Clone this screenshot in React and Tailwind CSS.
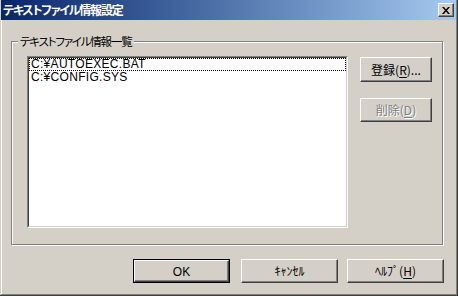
import React from 'react';

const FONT = "[font-family:'Noto_Sans_CJK_JP',sans-serif] [font-feature-settings:'palt']";
const LATIN = "[font-family:'Liberation_Sans','Noto_Sans_CJK_JP',sans-serif]";

function Btn({ children, disabled, def, className = '' }) {
  const face = (
    <div className="flex-1 flex items-center justify-center border border-t-white border-l-white border-r-[#404040] border-b-[#404040] shadow-[inset_-1px_-1px_0_#808080] bg-[#d4d0c8]">
      <span className={disabled ? 'text-[#808080] [text-shadow:1px_1px_0_#fff]' : 'text-black'}>{children}</span>
    </div>
  );
  return (
    <div className={`flex text-[12px] leading-none ${def ? 'border border-black' : ''} ${className}`}>
      {face}
    </div>
  );
}

function Ul({ children }) {
  return <span className="underline underline-offset-[2px]">{children}</span>;
}

export default function App() {
  const files = ['C:¥AUTOEXEC.BAT', 'C:¥CONFIG.SYS'];

  return (
    <div className={`w-[458px] h-[296px] bg-[#d4d0c8] border-r border-b border-[#404040] pl-px ${FONT}`}>
      <div className="h-full flex flex-col border-r border-b border-[#808080]">
        {/* title bar */}
        <div className="h-[20px] flex items-center justify-between bg-gradient-to-r from-[#0a246a] to-[#a6caf0] pl-[2px] pr-[2px]">
          <span className="text-white font-bold text-[12px] tracking-[-1.2px] leading-none">テキストファイル情報設定</span>
          <div className="w-[16px] h-[14px] flex items-center justify-center bg-[#d4d0c8] border border-t-white border-l-white border-r-[#404040] border-b-[#404040] shadow-[inset_-1px_-1px_0_#808080]">
            <svg width="8" height="7" viewBox="0 0 8 7">
              <path d="M0 0h2l2 2.5L6 0h2L5 3.5 8 7H6L4 4.5 2 7H0l3-3.5z" fill="#000" />
            </svg>
          </div>
        </div>

        {/* body */}
        <div className="flex-1 flex flex-col border-l border-white pl-[9px] pt-[21px]">
          {/* group box */}
          <div className="relative w-[432px] h-[204px] border border-[#808080] shadow-[inset_1px_1px_0_#fff,1px_1px_0_#fff] flex pl-[15px] pt-[14px]">
            <span className="absolute left-[6px] top-[-8px] px-[2px] bg-[#d4d0c8] text-[11.5px] tracking-[-1.2px] leading-[14px] text-black">テキストファイル情報一覧</span>

            {/* list box */}
            <div className="w-[321px] h-[172px] bg-white border border-t-[#808080] border-l-[#808080] border-r-white border-b-white">
              <div className="h-full border border-t-[#404040] border-l-[#404040] border-r-[#d4d0c8] border-b-[#d4d0c8]">
                {files.map((f, i) => (
                  <div
                    key={f}
                    className={`h-[13px] pl-px text-[12px] leading-[11px] tracking-[0.3px] text-black ${LATIN} ${i === 0 ? 'border border-dotted border-black' : 'border border-transparent'}`}
                  >
                    {f}
                  </div>
                ))}
              </div>
            </div>

            {/* side buttons */}
            <div className="flex flex-col gap-[16px] ml-[12px] pt-px">
              <Btn className="w-[72px] h-[25px]">登録(<Ul>R</Ul>)...</Btn>
              <Btn className="w-[72px] h-[24px]" disabled>削除(<Ul>D</Ul>)</Btn>
            </div>
          </div>

          {/* bottom buttons */}
          <div className="flex mt-[14px] pl-[122px]">
            <Btn def className="w-[97px] h-[24px]"><span className={LATIN}>OK</span></Btn>
            <Btn className="w-[97px] h-[24px] ml-[11px]">ｷｬﾝｾﾙ</Btn>
            <Btn className="w-[97px] h-[24px] ml-[9px]">ﾍﾙﾌﾟ(<Ul>H</Ul>)</Btn>
          </div>
        </div>
      </div>
    </div>
  );
}
